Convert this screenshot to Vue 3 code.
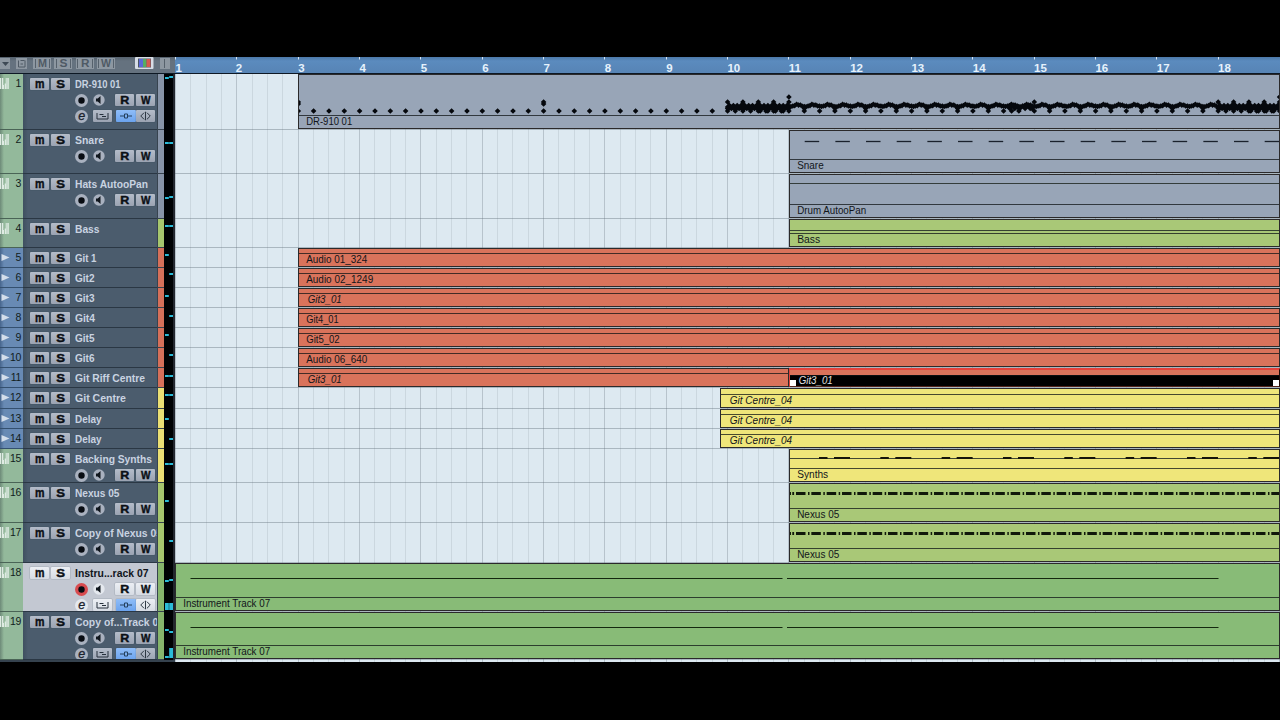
<script setup>
const BAR = 61.33
const ORIGIN = 0.5

const barX = (n) => ORIGIN + (n - 1) * BAR

const bars = Array.from({ length: 18 }, (_, i) => i + 1)

// grid lines, one per beat
const gridLines = []
for (let i = 0; i < 73; i++) {
  gridLines.push({ x: Math.floor(barX(1 + i / 4)) + 0.5, bar: i % 4 === 0 })
}

const kinds = {
  slate: '#98a5b7',
  lime: '#a9c877',
  red: '#d9735b',
  yellow: '#efe67a',
  green: '#88bb77'
}

const part = (start, label, w, extra = {}) => ({ start, label, w, ...extra })

const tracks = [
  { name: 'DR-910 01', nw: 45.5, h: 56, color: 'slate', type: 'inst', rows: 3, meter: [[3, 2], [2, 2]], clips: [part(3, 'DR-910 01', 46, { notes: 'drums' })] },
  { name: 'Snare', nw: 29, h: 44, color: 'slate', type: 'inst', rows: 2, meter: [[12, 2], [12, 2]], clips: [part(11, 'Snare', 26.5, { notes: 'snare' })] },
  { name: 'Hats AutooPan', nw: 73, h: 45, color: 'slate', type: 'inst', rows: 2, meter: [[23, 2], [22, 2]], clips: [part(11, 'Drum AutooPan', 69, { lines: [9] })] },
  { name: 'Bass', nw: 24.5, h: 29, color: 'lime', type: 'inst', rows: 1, meter: [[6, 2], [6, 2]], clips: [part(11, 'Bass', 23, { lines: [11] })] },
  { name: 'Git 1', nw: 21.5, h: 20, color: 'red', type: 'audio', rows: 1, meter: [[6, 2], null], clips: [part(3, 'Audio 01_324', 61)] },
  { name: 'Git2', nw: 19.5, h: 20, color: 'red', type: 'audio', rows: 1, meter: [null, [5, 2]], clips: [part(3, 'Audio 02_1249', 67)] },
  { name: 'Git3', nw: 19.5, h: 20, color: 'red', type: 'audio', rows: 1, meter: [[7, 2], null], clips: [part(3, 'Git3_01', 34, { italic: true })] },
  { name: 'Git4', nw: 20, h: 20, color: 'red', type: 'audio', rows: 1, meter: [null, [7, 2]], clips: [part(3, 'Git4_01', 32.5)] },
  { name: 'Git5', nw: 19.5, h: 20, color: 'red', type: 'audio', rows: 1, meter: [[6, 2], null], clips: [part(3, 'Git5_02', 33.5)] },
  { name: 'Git6', nw: 19.5, h: 20, color: 'red', type: 'audio', rows: 1, meter: [null, [6, 2]], clips: [part(3, 'Audio 06_640', 61)] },
  {
    name: 'Git Riff Centre', nw: 70, h: 20, color: 'red', type: 'audio', rows: 1, meter: [[7, 2], [7, 2]],
    clips: [part(3, 'Git3_01', 34, { italic: true, end: 11 }), part(11, 'Git3_01', 34, { italic: true, selected: true })]
  },
  { name: 'Git Centre', nw: 51, h: 21, color: 'yellow', type: 'audio', rows: 1, meter: [[6, 2], [6, 2]], clips: [part(9.875, 'Git Centre_04', 62.5, { italic: true })] },
  { name: 'Delay', nw: 26.5, h: 20, color: 'yellow', type: 'audio', rows: 1, meter: [[9, 2], null], clips: [part(9.875, 'Git Centre_04', 62.5, { italic: true })] },
  { name: 'Delay', nw: 26.5, h: 20, color: 'yellow', type: 'audio', rows: 1, meter: [null, [9, 2]], clips: [part(9.875, 'Git Centre_04', 62.5, { italic: true })] },
  { name: 'Backing Synths', nw: 77, h: 34, color: 'yellow', type: 'inst', rows: 2, meter: [[14, 2], [14, 2]], clips: [part(11, 'Synths', 31, { lines: [9], notes: 'synths' })] },
  { name: 'Nexus 05', nw: 44.5, h: 40, color: 'lime', type: 'inst', rows: 2, meter: [[17, 2], null], clips: [part(11, 'Nexus 05', 42, { notes: 'nexus' })] },
  { name: 'Copy of Nexus 05', nw: 87, h: 40, color: 'lime', type: 'inst', rows: 2, meter: [null, [17, 2]], clips: [part(11, 'Nexus 05', 42, { notes: 'nexus' })] },
  { name: 'Instru...rack 07', nw: 73.5, h: 49, color: 'green', type: 'inst', rows: 3, active: true, meter: [[17, 2], [16, 2], [40, 7], [40, 7]], clips: [part(1, 'Instrument Track 07', 87, { notes: 'long' })] },
  { name: 'Copy of...Track 07', nw: 89, h: 48, color: 'green', type: 'inst', rows: 3, meter: [[17, 2], [19, 2], [44, 2], [36, 10]], clips: [part(1, 'Instrument Track 07', 87, { notes: 'long' })] }
]

// drum hits relative to the start of the part (bar 3)
const hits = []
const hit = (bar, y) => hits.push([(bar - 3) * BAR - 0.7, y])

function fill(from, to) {
  const n = Math.round((to - from) * 32)
  for (let i = 0; i <= n; i++) {
    const b = from + i / 32
    if (i % 8 === 0) {
      hit(b, 27)
      hit(b, 36)
    }
    hit(b, i % 2 ? 30.5 : 32)
    hit(b, i % 2 ? 32.5 : 33.5)
    if (i % 4 === 0 || (i > n / 2 && i % 4 === 1)) hit(b, 36)
  }
}

for (let b = 3; b < 10; b += 0.25) hit(b, 36)
for (const b of [3, 7]) {
  hit(b, 27)
  hit(b, 29)
}
fill(10, 11)
hit(11, 22)
hit(11, 27)
const wave = [31, 31, 29.3, 30, 31.5, 31, 29.3, 30]
for (let i = 0; i < 112; i++) {
  const b = 11 + i / 16
  hit(b, wave[i % 8])
  hit(b + 1 / 32, (wave[i % 8] + wave[(i + 1) % 8]) / 2 + 0.5)
  if (i % 8 === 0) hit(b, 36)
  if (i % 8 === 4) {
    hit(b, 33.5)
    hit(b, 36)
  }
}
for (let i = 0; i < 9; i++) {
  hit(14.6 + i / 24, i % 2 ? 31 : 33.5)
}
hit(14.63, 36)
hit(14.97, 34)
hit(15, 27)
fill(18, 19)
hit(19, 22)

const drumPath = hits
  .map(([x, y]) => `M${(x - 2.8).toFixed(1)} ${y.toFixed(1)}l2.8-2.8l2.8 2.8l-2.8 2.8z`)
  .join('')

const dashes = Array.from({ length: 17 }, (_, i) => 14.7 + i * BAR / 2)
const synthBars = Array.from({ length: 8 }, (_, i) => 29 + i * BAR)
const arpSteps = Array.from({ length: 32 }, (_, i) => 6 + i * BAR / 4)

const clipWidth = (c) =>
  c.end ? Math.round(barX(c.end)) - Math.round(barX(c.start)) : 1105 - Math.round(clipX(c))
const clipX = (c) => (c.start === 1 ? 0 : Math.round(barX(c.start)))
const clipLeft = (c) => (c.selected ? 0 : clipX(c))
</script>

<template>
  <div class="screen">
    <header class="top">
      <div class="tools">
        <svg width="175" height="16" viewBox="0 0 175 16">
          <g fill="#8d97a1">
            <rect x="0" y="1" width="10" height="11" />
            <rect x="16" y="1" width="11" height="11" />
            <rect x="33" y="1" width="18" height="11" />
            <rect x="54" y="1" width="18" height="11" />
            <rect x="76" y="1" width="18" height="11" />
            <rect x="97" y="1" width="18" height="11" />
            <rect x="160" y="1" width="10" height="11" />
          </g>
          <path d="M2 5h7l-3.500 4z" fill="#3d4955" />
          <path d="M18.500 3.500v6.500h6.500v-6.500M20.500 3.500h4M20.500 7h2.500" fill="none" stroke="#4f5a65" />
          <path d="M35.500 2v9M49.500 2v9M56.500 2v9M70.500 2v9M77.500 2v9M92.500 2v9M98.500 2v9M113.500 2v9M164.500 2v9" stroke="#56616c" />
          <g class="mini">
            <text x="38" y="10.200" textLength="9" lengthAdjust="spacingAndGlyphs">M</text>
            <text x="59.500" y="10.200" textLength="8" lengthAdjust="spacingAndGlyphs">S</text>
            <text x="81" y="10.200" textLength="8.500" lengthAdjust="spacingAndGlyphs">R</text>
            <text x="101" y="10.200" textLength="10" lengthAdjust="spacingAndGlyphs">W</text>
          </g>
          <rect x="135" y="0" width="18.500" height="12" rx="1" fill="#d7dde6" />
          <rect x="138" y="1.500" width="13" height="9" fill="#4b5664" />
          <rect x="139" y="2" width="4" height="8" fill="#5b69d8" />
          <rect x="143" y="2" width="3.500" height="8" fill="#55ad62" />
          <rect x="146.500" y="2" width="4" height="8" fill="#d65b50" />
        </svg>
      </div>
      <svg class="ruler" width="1105" height="16" viewBox="0 0 1105 16">
        <g v-for="n in bars" :key="n">
          <path :d="`M${Math.floor(barX(n)) + 0.5} 0v2.500`" stroke="#d5e5f5" />
          <text :x="barX(n) + (n === 2 ? -1 : 0)" y="14.500">{{ n }}</text>
        </g>
      </svg>
    </header>

    <main class="project">
      <svg class="grid" width="1105" height="588" viewBox="0 0 1105 588">
        <path v-for="(l, i) in gridLines" :key="i" :d="`M${l.x} 0v588`" :stroke="l.bar ? '#b7c3cc' : '#cbd7df'" />
      </svg>

      <section
        v-for="(t, i) in tracks"
        :key="i"
        class="row"
        :class="[t.type, { active: t.active }]"
        :style="{ height: t.h + 'px' }"
      >
        <div class="index">
          <svg v-if="t.type === 'inst'" width="10" height="13" viewBox="0 0 10 13">
            <path d="M0 1h1.300v11h-1.300zM2 1h1.300v7h.700v4h-2zM4.700 6.500h1v-5.500h1v11h-2zM7.300 1h1.500v11h-1.500z" fill="#dfebe3" />
          </svg>
          <svg v-else width="10" height="13" viewBox="0 0 10 13">
            <path d="M1.500 3l8 3.500l-8 3.500z" fill="#d4deeb" />
          </svg>
          <span>{{ i + 1 }}</span>
        </div>

        <div class="body">
          <div class="line">
            <svg class="btn" width="19" height="12"><text x="5" y="9.800" textLength="9.500" lengthAdjust="spacingAndGlyphs" class="low">m</text></svg>
            <svg class="btn second" width="19" height="12"><text x="5.200" y="9.700" textLength="8.800" lengthAdjust="spacingAndGlyphs">S</text></svg>
            <svg class="name" width="82" height="14">
              <text x="0" y="10.500" :textLength="t.nw" lengthAdjust="spacingAndGlyphs">{{ t.name }}</text>
            </svg>
          </div>

          <div v-if="t.rows > 1" class="line sub">
            <svg width="13" height="13" viewBox="0 0 13 13">
              <circle class="knob" :class="{ rec: t.active }" cx="6.500" cy="6.500" r="6.500" />
              <circle cx="6.500" cy="6.500" r="3.200" fill="#080c12" />
            </svg>
            <svg class="speaker" width="12" height="12" viewBox="0 0 12 12">
              <circle class="knob" cx="6" cy="6" r="5.700" />
              <path d="M3 4.500h1.700l2.800-2.500v8l-2.800-2.500h-1.700z" fill="#10161d" />
            </svg>
            <svg class="btn" width="19" height="12"><text x="5.300" y="9.700" textLength="9" lengthAdjust="spacingAndGlyphs">R</text></svg>
            <svg class="btn write" width="19" height="12"><text x="5" y="9.700" textLength="9.500" lengthAdjust="spacingAndGlyphs">W</text></svg>
          </div>

          <div v-if="t.rows > 2" class="line sub">
            <svg width="13" height="13" viewBox="0 0 13 13">
              <circle class="knob" cx="6.500" cy="6.500" r="6.500" />
              <text x="3.300" y="10.200" class="edit">e</text>
            </svg>
            <svg class="btn folder" width="19" height="12" viewBox="0 0 19 12">
              <path d="M4 3v6h11v-6M6.500 4.500h4M9 6.500h4" fill="none" stroke="#26303c" />
            </svg>
            <svg class="btn blue" width="20" height="12" viewBox="0 0 20 12">
              <path d="M4 6h4M12 6h4M8.500 4h3v4h-3z" fill="none" stroke="#24415f" />
            </svg>
            <svg class="btn" width="19" height="12" viewBox="0 0 20 12">
              <path d="M10 1.500v9M8.500 2.500l-3.500 3.500l3.500 3.500M11.500 2.500l3.500 3.500l-3.500 3.500" fill="none" stroke="#26303c" />
            </svg>
          </div>
        </div>

        <div class="strip" :class="t.color"></div>

        <svg class="meter" width="9" :height="t.h">
          <template v-for="(m, k) in t.meter" :key="k">
            <rect v-if="m" :x="k % 2 ? 5.200 : 1" :y="m[0]" width="3.800" :height="m[1]" />
          </template>
        </svg>
        <div class="divider"></div>

        <div class="lane">
          <div
            v-for="(c, k) in t.clips"
            :key="k"
            class="clip"
            :class="{ selected: c.selected, audio: t.type === 'audio' }"
            :style="{ marginLeft: clipLeft(c) + 'px', width: clipWidth(c) + 'px', backgroundColor: kinds[t.color] }"
          >
            <svg v-if="t.type === 'inst'" class="notes" :width="clipWidth(c)" :height="t.h - 16">
              <path v-for="y in c.lines" :key="y" :d="`M0 ${y - 0.5}h1104`" stroke="#222a26" stroke-opacity="0.850" />
              <path v-if="c.notes === 'drums'" :d="drumPath" fill="#05080d" />
              <template v-else-if="c.notes === 'snare'">
                <path v-for="x in dashes" :key="x" :d="`M${x} 10.500h14.500`" stroke="#1a212c" stroke-width="1.300" />
              </template>
              <template v-else-if="c.notes === 'synths'">
                <path v-for="x in synthBars" :key="x" :d="`M${x} 8h8.500M${x + 15} 8h16`" stroke="#15140a" stroke-width="2" />
              </template>
              <template v-else-if="c.notes === 'nexus'">
                <path d="M0 9.500h1M2.300 9.500h1.800" stroke="#10180a" stroke-width="3" />
                <path v-for="x in arpSteps" :key="x" :d="`M${x} 9.500h9.500M${x + 12} 9.500h1.500`" stroke="#10180a" stroke-width="3" />
              </template>
              <path v-else-if="c.notes === 'long'" d="M14.500 14.500h592M611 14.500h431.500" stroke="#14290f" stroke-width="1.200" />
            </svg>
            <svg class="label" width="120" height="12">
              <text
                :x="c.italic ? 8.700 : 7.200"
                y="9.200"
                :textLength="c.w"
                lengthAdjust="spacingAndGlyphs"
                :class="{ italic: c.italic }"
              >{{ c.label }}</text>
            </svg>
            <template v-if="c.selected">
              <i class="handle left"></i>
              <i class="handle right"></i>
            </template>
          </div>
        </div>
      </section>
      <div class="tail"></div>
    </main>
  </div>
</template>

<style scoped>
.screen {
  width: 1280px;
  height: 720px;
  box-sizing: border-box;
  padding-top: 57px;
  background: #000;
  overflow: hidden;
  font-family: 'Liberation Sans', Arial, sans-serif;
}

svg {
  display: block;
  flex: none;
}

.top {
  display: flex;
  height: 16px;
  border-bottom: 1px solid #0d1824;
}

.tools {
  width: 175px;
  background: linear-gradient(#55616d, #65727f 4px);
}

.mini text {
  font-size: 10px;
  font-weight: bold;
  fill: #4f5a65;
}

.ruler {
  background: linear-gradient(#4c78a8, #5b8bbe 4px, #5784b5);
}

.ruler text {
  font-size: 11.5px;
  font-weight: bold;
  fill: #e6f2fc;
}

.project {
  position: relative;
  height: 588px;
  background: #dde9f1;
}

.grid {
  position: absolute;
  left: 175px;
  top: 0;
}

.row {
  position: relative;
  display: grid;
  grid-template-columns: 23px 134px 7px 9px 2px 1fr;
  overflow: hidden;
}

.index {
  display: flex;
  justify-content: space-between;
  box-sizing: border-box;
  padding: 3px 2px 0 0;
  font-size: 10.5px;
  line-height: 13px;
  color: #111c1b;
  letter-spacing: -0.3px;
  border-bottom: 1px solid #4a6456;
  background: linear-gradient(90deg, #6d8a78, #93b99b 4px);
}

.audio .index {
  border-color: #34506f;
  background: linear-gradient(90deg, #47658c, #688ab4 4px);
}

.body {
  box-sizing: border-box;
  height: 100%;
  overflow: hidden;
  padding: 4px 0 0 7px;
  border-bottom: 1px solid #2a3744;
  background: linear-gradient(90deg, #3f5060, #4b5c6d 5px, #4b5c6d);
}

.line {
  display: flex;
  align-items: center;
  height: 12px;
}

.sub {
  margin: 4px 0 0 45px;
}

.btn {
  background: linear-gradient(#b4bcc9, #9ba3b2);
  border-radius: 1px;
  box-shadow: 0 0 1px #303e4d;
}

.btn text {
  font-size: 10.5px;
  font-weight: bold;
  fill: #0b0f15;
  stroke: #0b0f15;
  stroke-width: 0.4px;
}

.btn .low {
  font-size: 12.5px;
}

.second {
  margin-left: 2px;
}

.write {
  margin-left: 2px;
}

.name {
  margin-left: 5px;
}

.name text {
  font-size: 11px;
  font-weight: bold;
  fill: #c9d3e1;
}

.knob {
  fill: #a9b1bf;
}

.speaker {
  margin: 0 10px 0 5px;
}

.folder {
  margin: 0 4px 0 5px;
}

.blue {
  background: linear-gradient(#8fbdf8, #6ba3ee);
}

.edit {
  font-size: 12.5px;
  font-style: italic;
  fill: #1a222d;
  stroke: #1a222d;
  stroke-width: 0.3px;
}

.active .body {
  background: #c3c8d2;
}

.active .btn:not(.blue) {
  background: linear-gradient(#eceff4, #d7dce4);
}

.active .name text {
  fill: #10141b;
}

.active .knob {
  fill: #e4e8ee;
}

.active .rec {
  fill: #d84b4f;
}

.strip {
  border-left: 1px solid #37434f;
  border-bottom: 1px solid #37434f;
}

.slate {
  background: #8794a8;
}

.lime {
  background: #a6c66e;
}

.red {
  background: #d5705a;
}

.yellow {
  background: #eadf74;
}

.green {
  background: #86b56c;
}

.meter {
  background: #000204;
}

.meter rect {
  fill: #2bbbd8;
}

.divider {
  background: #22262e;
}

.lane {
  display: flex;
  min-width: 0;
  overflow: hidden;
  box-sizing: border-box;
  border-bottom: 1px solid rgba(96, 108, 120, 0.4);
}

.clip {
  position: relative;
  flex: none;
  display: flex;
  flex-direction: column;
  justify-content: flex-end;
  box-sizing: border-box;
  border: 1px solid #2b2a2b;
  overflow: hidden;
}

.notes {
  flex: 1;
  min-height: 0;
}

.label {
  width: 100%;
  border-top: 1px solid rgba(15, 20, 22, 0.75);
}

.label text {
  font-size: 10.5px;
  fill: #12151a;
}

.label .italic {
  font-style: italic;
}

.selected {
  border-color: #e2433c #1c0b09 #54241c #e2433c;
  border-top-width: 2px;
}

.selected .label {
  height: 10px;
  background: #000;
}

.selected .label text {
  fill: #e2e2e2;
  transform: translateY(-1px);
}

.handle {
  position: absolute;
  bottom: -1px;
  width: 6px;
  height: 7px;
  background: #fff;
}

.left {
  left: 0;
}

.right {
  right: 0;
}

.tail {
  height: 2px;
  margin-right: 1105px;
  background: #35424e;
}
</style>

<style>
body {
  margin: 0;
  background: #000;
}
</style>
